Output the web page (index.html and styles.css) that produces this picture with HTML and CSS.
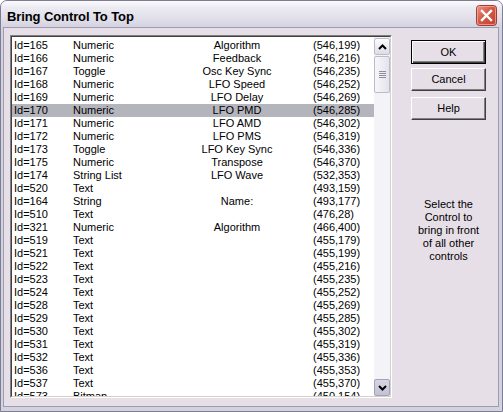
FILE: index.html
```html
<!DOCTYPE html>
<html>
<head>
<meta charset="utf-8">
<link rel="stylesheet" href="styles.css">
</head>
<body>
<div class="window">
  <div class="titlebar">
    <span class="title">Bring Control To Top</span>
    <button class="close" aria-label="Close">
      <svg width="21" height="21" viewBox="0 0 21 21">
        <defs>
          <linearGradient id="cg" x1="0" y1="0" x2="1" y2="1">
            <stop offset="0" stop-color="#ec9a8a"/>
            <stop offset="0.45" stop-color="#d5594a"/>
            <stop offset="1" stop-color="#c0402f"/>
          </linearGradient>
        </defs>
        <rect x="0.5" y="0.5" width="20" height="20" rx="3" fill="url(#cg)" stroke="#a33b2e"/>
        <rect x="1.5" y="1.5" width="18" height="18" rx="2" fill="none" stroke="#f2b3a6" stroke-opacity="0.7"/>
        <path d="M6 6 L15 15 M15 6 L6 15" stroke="#ffffff" stroke-width="2.4" stroke-linecap="square"/>
      </svg>
    </button>
  </div>
  <div class="content">
    <div class="list">
      <div class="list-inner">
        <div class="rows">
          <div class="row"><span>Id=165</span><span>Numeric</span><span class="name">Algorithm</span><span>(546,199)</span></div>
          <div class="row"><span>Id=166</span><span>Numeric</span><span class="name">Feedback</span><span>(546,216)</span></div>
          <div class="row"><span>Id=167</span><span>Toggle</span><span class="name">Osc Key Sync</span><span>(546,235)</span></div>
          <div class="row"><span>Id=168</span><span>Numeric</span><span class="name">LFO Speed</span><span>(546,252)</span></div>
          <div class="row"><span>Id=169</span><span>Numeric</span><span class="name">LFO Delay</span><span>(546,269)</span></div>
          <div class="row sel"><span>Id=170</span><span>Numeric</span><span class="name">LFO PMD</span><span>(546,285)</span></div>
          <div class="row"><span>Id=171</span><span>Numeric</span><span class="name">LFO AMD</span><span>(546,302)</span></div>
          <div class="row"><span>Id=172</span><span>Numeric</span><span class="name">LFO PMS</span><span>(546,319)</span></div>
          <div class="row"><span>Id=173</span><span>Toggle</span><span class="name">LFO Key Sync</span><span>(546,336)</span></div>
          <div class="row"><span>Id=175</span><span>Numeric</span><span class="name">Transpose</span><span>(546,370)</span></div>
          <div class="row"><span>Id=174</span><span>String List</span><span class="name">LFO Wave</span><span>(532,353)</span></div>
          <div class="row"><span>Id=520</span><span>Text</span><span class="name"></span><span>(493,159)</span></div>
          <div class="row"><span>Id=164</span><span>String</span><span class="name">Name:</span><span>(493,177)</span></div>
          <div class="row"><span>Id=510</span><span>Text</span><span class="name"></span><span>(476,28)</span></div>
          <div class="row"><span>Id=321</span><span>Numeric</span><span class="name">Algorithm</span><span>(466,400)</span></div>
          <div class="row"><span>Id=519</span><span>Text</span><span class="name"></span><span>(455,179)</span></div>
          <div class="row"><span>Id=521</span><span>Text</span><span class="name"></span><span>(455,199)</span></div>
          <div class="row"><span>Id=522</span><span>Text</span><span class="name"></span><span>(455,216)</span></div>
          <div class="row"><span>Id=523</span><span>Text</span><span class="name"></span><span>(455,235)</span></div>
          <div class="row"><span>Id=524</span><span>Text</span><span class="name"></span><span>(455,252)</span></div>
          <div class="row"><span>Id=528</span><span>Text</span><span class="name"></span><span>(455,269)</span></div>
          <div class="row"><span>Id=529</span><span>Text</span><span class="name"></span><span>(455,285)</span></div>
          <div class="row"><span>Id=530</span><span>Text</span><span class="name"></span><span>(455,302)</span></div>
          <div class="row"><span>Id=531</span><span>Text</span><span class="name"></span><span>(455,319)</span></div>
          <div class="row"><span>Id=532</span><span>Text</span><span class="name"></span><span>(455,336)</span></div>
          <div class="row"><span>Id=536</span><span>Text</span><span class="name"></span><span>(455,353)</span></div>
          <div class="row"><span>Id=537</span><span>Text</span><span class="name"></span><span>(455,370)</span></div>
          <div class="row"><span>Id=573</span><span>Bitmap</span><span class="name"></span><span>(450,154)</span></div>
        </div>
        <div class="scrollbar">
          <div class="sb-btn">
            <svg width="9" height="6" viewBox="0 0 9 6"><polyline points="1,5 4.5,1.5 8,5" fill="none" stroke="#000" stroke-width="2"/></svg>
          </div>
          <div class="sb-thumb">
            <span class="grip"></span><span class="grip"></span><span class="grip"></span><span class="grip"></span>
          </div>
          <div class="sb-track"></div>
          <div class="sb-btn down">
            <svg width="9" height="6" viewBox="0 0 9 6"><polyline points="1,1 4.5,4.5 8,1" fill="none" stroke="#000" stroke-width="2"/></svg>
          </div>
        </div>
      </div>
    </div>
    <div class="side">
      <button class="btn default">OK</button>
      <button class="btn cancel">Cancel</button>
      <button class="btn help">Help</button>
      <p class="note">Select the<br>Control to<br>bring in front<br>of all other<br>controls</p>
    </div>
  </div>
</div>
</body>
</html>
```
FILE: styles.css
```css
* { box-sizing: border-box; }

body {
  margin: 0;
  background: #ffffff;
  font-family: "Liberation Sans", Arial, sans-serif;
  font-size: 11px;
  color: #000;
}

.window {
  width: 503px;
  height: 412px;
  display: flex;
  flex-direction: column;
  background: #d3d2df;
  border: 1px solid #7d7c92;
  border-radius: 7px 7px 0 0;
  overflow: hidden;
}

.titlebar {
  height: 27px;
  flex: none;
  display: flex;
  align-items: center;
  padding: 4px 5px 0 6px;
  background: linear-gradient(#fbfbfd 0%, #ecebf2 25%, #dfdde8 70%, #d2d1de 100%);
}

.title {
  font-weight: bold;
  font-size: 13px;
  letter-spacing: -0.1px;
  color: #000;
}

.close {
  margin-left: auto;
  align-self: flex-start;
  width: 21px;
  height: 21px;
  padding: 0;
  border: 0;
  background: none;
  display: block;
}
.close svg { display: block; }

.content {
  flex: 1;
  display: flex;
  margin: 0 4px 5px 3px;
  padding: 7px 0 0 6px;
  background: #e7dfe7;
  box-shadow: 0 0 0 1px #9c9bb0;
}

.list {
  width: 382px;
  height: 363px;
  flex: none;
  border: 1px solid;
  border-color: #808080 #ffffff #ffffff #808080;
}

.list-inner {
  height: 100%;
  display: flex;
  border: 1px solid;
  border-color: #404040 #d4d0c8 #d4d0c8 #404040;
  background: #ffffff;
}

.rows {
  flex: 1;
  padding-top: 2px;
  overflow: hidden;
}

.row {
  display: grid;
  grid-template-columns: 59px 88px 152px 1fr;
  height: 13px;
  line-height: 13px;
  padding-left: 2px;
  white-space: nowrap;
}

.row.sel { background: #b4b4bc; }

.name { text-align: center; }

.scrollbar {
  width: 16px;
  flex: none;
  display: flex;
  flex-direction: column;
  background: #f4f3f7;
  padding: 1px 0 0 0;
}

.sb-btn {
  height: 17px;
  flex: none;
  display: flex;
  align-items: center;
  justify-content: center;
  border: 1px solid #bcbbcc;
  border-radius: 2px;
  background: linear-gradient(#fdfdfe, #dedde7);
}
.sb-btn svg { display: block; }

.sb-btn.down {
  border-color: #a3a2b6;
  background: linear-gradient(#d6d5e2, #c3c2d4);
}

.sb-thumb {
  height: 37px;
  flex: none;
  margin-top: 1px;
  display: flex;
  flex-direction: column;
  align-items: center;
  justify-content: center;
  gap: 1px;
  border: 1px solid #bcbbcc;
  border-radius: 2px;
  background: linear-gradient(90deg, #f7f7fa, #e4e3ec);
}

.grip {
  display: block;
  width: 7px;
  height: 1px;
  background: #8f8ea3;
}

.sb-track { flex: 1; }

.side {
  width: 75px;
  flex: none;
  margin-left: 19px;
  padding-top: 5px;
  display: flex;
  flex-direction: column;
}

.btn {
  display: block;
  width: 75px;
  height: 23px;
  padding: 0;
  font-family: "Liberation Sans", Arial, sans-serif;
  font-size: 11px;
  line-height: 21px;
  color: #000;
  text-align: center;
  background: #e7dfe7;
  border: 1px solid;
  border-color: #ffffff #404040 #404040 #ffffff;
  box-shadow: inset -1px -1px 0 #808080;
}

.btn.default {
  height: 24px;
  line-height: 22px;
  border: 1px solid #000;
  box-shadow: inset 1px 1px 0 #ffffff, inset -1px -1px 0 #404040, inset -2px -2px 0 #808080;
}

.btn.cancel { margin-top: 4px; }
.btn.help { margin-top: 6px; }

.note {
  margin: 78px 0 0 0;
  text-align: center;
  line-height: 13px;
}
```
